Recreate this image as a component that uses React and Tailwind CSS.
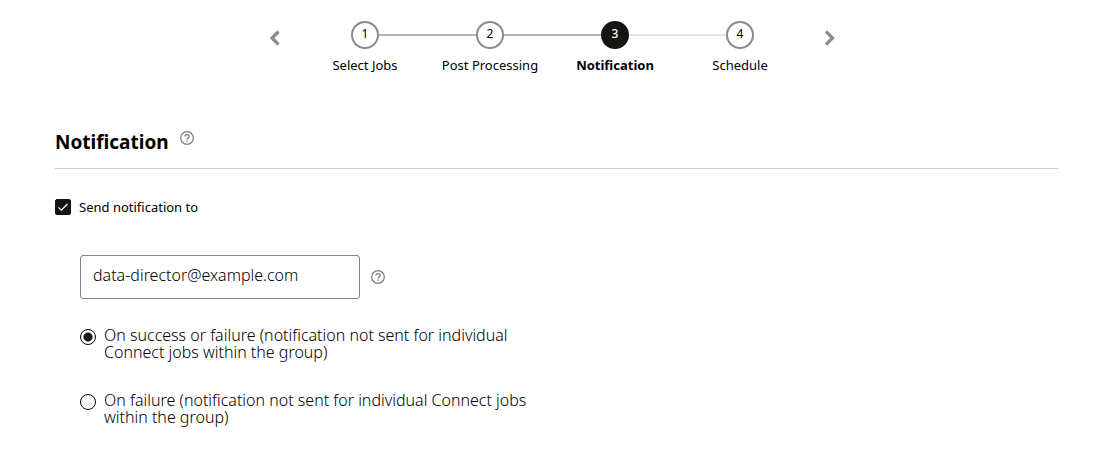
import React, { useState } from "react";

const STEPS = ["Select Jobs", "Post Processing", "Notification", "Schedule"];

const TRIGGERS = [
  {
    value: "always",
    label: "On success or failure (notification not sent for individual Connect jobs within the group)",
  },
  {
    value: "failure",
    label: "On failure (notification not sent for individual Connect jobs within the group)",
  },
];

function HelpIcon() {
  return (
    <svg viewBox="0 0 14 14" className="h-3.5 w-3.5" fill="none" stroke="currentColor">
      <circle cx="7" cy="7" r="6.3" strokeWidth="1.2" />
      <path d="M4.9 5.6c0-1.2.9-1.9 2.1-1.9s2.1.7 2.1 1.8c0 .8-.5 1.2-1.1 1.6-.6.4-1 .7-1 1.4" strokeWidth="1.3" />
      <path d="M7 9.4v1.4" strokeWidth="1.4" />
    </svg>
  );
}

function HelpButton({ label }) {
  return (
    <button type="button" aria-label={label} className="block text-[#7b7a78] hover:text-black">
      <HelpIcon />
    </button>
  );
}

function Chevron({ d }) {
  return (
    <svg viewBox="0 0 12 16" className="h-4 w-3" fill="none" stroke="currentColor" strokeWidth="3.2">
      <path d={d} />
    </svg>
  );
}

function Step({ index, label, current, onSelect }) {
  const active = index === current;
  const lineBefore = index === 0 ? "bg-transparent" : index <= current ? "bg-[#adb6be]" : "bg-[#e2e7ea]";
  const lineAfter = index === STEPS.length - 1 ? "bg-transparent" : index < current ? "bg-[#adb6be]" : "bg-[#e2e7ea]";

  return (
    <li className="w-[125px]">
      <button
        type="button"
        onClick={() => onSelect(index)}
        aria-current={active ? "step" : undefined}
        className="flex w-full flex-col items-center gap-1.5"
      >
        <span className="flex w-full items-center">
          <span className={`h-0.5 flex-1 ${lineBefore}`} />
          <span
            className={`flex h-7 w-7 items-center justify-center rounded-full border-2 pb-0.5 text-xs ${
              active ? "border-[#161513] bg-[#161513] font-medium text-white" : "border-[#878b8f] bg-white font-normal"
            }`}
          >
            {index + 1}
          </span>
          <span className={`h-0.5 flex-1 ${lineAfter}`} />
        </span>
        <span className={`text-[13px] leading-5 ${active ? "font-bold" : "font-normal"}`}>{label}</span>
      </button>
    </li>
  );
}

export default function App() {
  const [step, setStep] = useState(2);
  const [enabled, setEnabled] = useState(true);
  const [email, setEmail] = useState("data-director@example.com");
  const [trigger, setTrigger] = useState("always");

  return (
    <div className="min-h-screen bg-white pt-[21px] pb-8 font-['Noto_Sans',sans-serif] font-light text-black">
      <nav aria-label="Steps" className="flex justify-center gap-[22px] pl-0.5">
        <button
          type="button"
          aria-label="Previous"
          onClick={() => setStep(Math.max(step - 1, 0))}
          className="mt-[9px] h-4 text-[#878b8f]"
        >
          <Chevron d="M9.5 1.5 3 8 9.5 14.5" />
        </button>
        <ol className="flex">
          {STEPS.map((label, i) => (
            <Step key={label} index={i} label={label} current={step} onSelect={setStep} />
          ))}
        </ol>
        <button
          type="button"
          aria-label="Next"
          onClick={() => setStep(Math.min(step + 1, STEPS.length - 1))}
          className="mt-[9px] h-4 text-[#878b8f]"
        >
          <Chevron d="M1 1.5 7.5 8 1 14.5" />
        </button>
      </nav>

      <main className="mt-[51px] pr-[45px] pl-[55px]">
        <div className="flex gap-[11px] border-b border-[#c7d3da] pb-2.5">
          <h1 className="text-[19px] leading-8 font-bold">Notification</h1>
          <div className="pt-[5px]">
            <HelpButton label="About notifications" />
          </div>
        </div>

        <label className="mt-7 flex items-center gap-2 text-[13px] leading-5 font-normal">
          <span className="grid h-4 w-4 place-items-center">
            <input
              type="checkbox"
              checked={enabled}
              onChange={(e) => setEnabled(e.target.checked)}
              className="col-start-1 row-start-1 h-4 w-4 appearance-none rounded-xs border border-[#161513] checked:bg-[#161513]"
            />
            {enabled && (
              <svg
                viewBox="0 0 16 16"
                className="pointer-events-none col-start-1 row-start-1 h-4 w-4"
                fill="none"
                stroke="white"
                strokeWidth="1.3"
              >
                <path d="m3.5 8.4 2.8 2.8 6.2-6.2" />
              </svg>
            )}
          </span>
          Send notification to
        </label>

        <div className="mt-[38px] ml-[25px]">
          <div className="flex items-center gap-[11px]">
            <input
              type="email"
              aria-label="Email address"
              value={email}
              disabled={!enabled}
              onChange={(e) => setEmail(e.target.value)}
              className="h-11 w-70 rounded-[3px] border border-[#878583] px-3 pb-1 text-base"
            />
            <HelpButton label="About the email address" />
          </div>

          <fieldset className="mt-7 flex flex-col gap-[31px]" disabled={!enabled}>
            {TRIGGERS.map(({ value, label }) => (
              <label key={value} className="flex max-w-[460px] gap-2 text-base leading-[17px]">
                <input
                  type="radio"
                  name="trigger"
                  value={value}
                  checked={trigger === value}
                  onChange={() => setTrigger(value)}
                  className="mt-0.5 h-4 w-4 shrink-0 appearance-none rounded-full border border-black checked:bg-[radial-gradient(circle,#161513_4px,transparent_5px)]"
                />
                {label}
              </label>
            ))}
          </fieldset>
        </div>
      </main>
    </div>
  );
}
